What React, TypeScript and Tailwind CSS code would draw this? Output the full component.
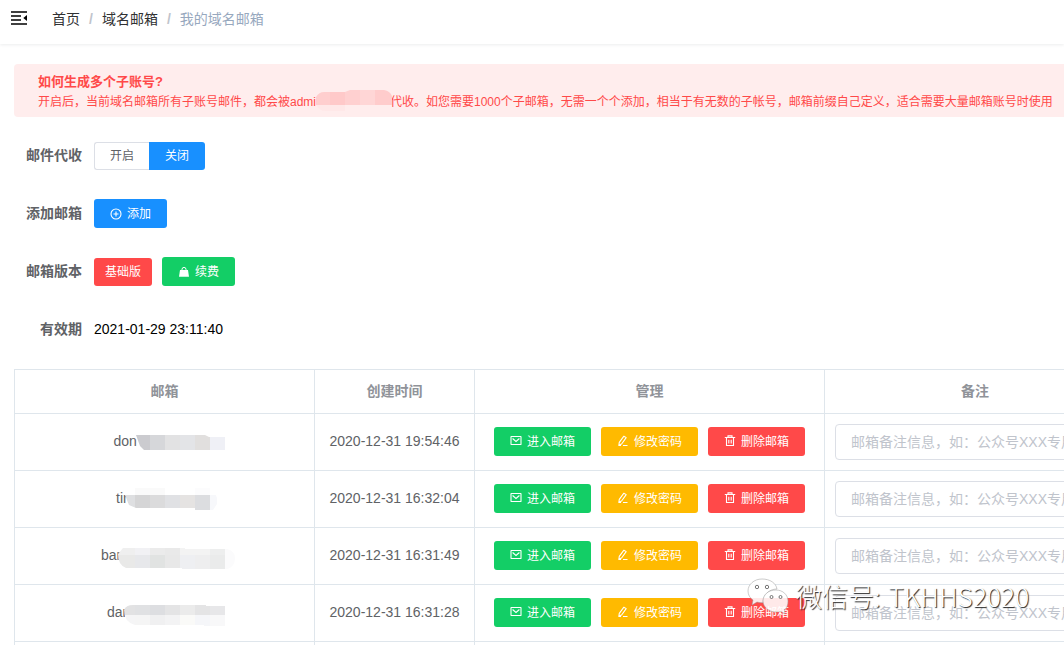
import clsx from "clsx";
import React from "react";

type IconProps = { className?: string };

const strokeProps = {
  viewBox: "0 0 12 12",
  width: 12,
  height: 12,
  fill: "none",
  stroke: "currentColor",
  strokeWidth: 1.1,
};

const MessageIcon = ({ className }: IconProps) => (
  <svg {...strokeProps} className={className}>
    <rect x="1" y="1.5" width="10" height="8" rx="0.3" />
    <path d="M2.6 3.5 L6 6.5 L9.4 3.5" />
  </svg>
);

const EditIcon = ({ className }: IconProps) => (
  <svg {...strokeProps} className={className}>
    <path d="M6.9 1.2 L9.2 2.6 L4.6 9 L1.9 10 L2.3 7.4 Z" strokeLinejoin="round" />
    <path d="M1.5 10.5 H4 M6 10.5 H10.5" />
  </svg>
);

const DeleteIcon = ({ className }: IconProps) => (
  <svg {...strokeProps} className={className}>
    <path d="M0.8 2.5 H11.2 M4 2.5 V0.9 H8 V2.5 M2.5 3 V10.5 H9.5 V3 M4.8 4.8 V8.5 M7.2 4.8 V8.5" />
  </svg>
);

const PlusIcon = ({ className }: IconProps) => (
  <svg {...strokeProps} className={className}>
    <circle cx="6" cy="6" r="5" />
    <path d="M6 3.5 V8.5 M3.5 6 H8.5" />
  </svg>
);

const GoodsIcon = ({ className }: IconProps) => (
  <svg viewBox="0 0 12 12" width="12" height="12" className={className}>
    <path d="M4 4.5 V3.4 a2 2 0 0 1 4 0 V4.5" fill="none" stroke="currentColor" />
    <path d="M2 4 H10 L11 10.8 H1 Z" fill="currentColor" />
  </svg>
);

const FoldIcon = () => (
  <svg viewBox="0 0 16 14" width="16" height="14" className="text-black">
    <path
      d="M0 1 H16 M0 5 H10 M0 9 H10 M0 13 H16"
      stroke="currentColor"
      strokeWidth="1.5"
      fill="none"
    />
    <path d="M16 4 V10 L12.3 7 Z" fill="currentColor" />
  </svg>
);

const colors: Record<string, string> = {
  primary: "bg-[#1890ff]",
  success: "bg-[#13ce66]",
  warning: "bg-[#ffba00]",
  danger: "bg-[#ff4949]",
};

function Button({
  type,
  icon: Icon,
  children,
}: {
  type: string;
  icon: React.FC<IconProps>;
  children: React.ReactNode;
}) {
  return (
    <button
      type="button"
      className={clsx(
        "mb-px flex h-[29px] shrink-0 items-center gap-[5px] rounded-[3px] px-4 text-xs whitespace-nowrap text-white",
        colors[type]
      )}
    >
      <Icon />
      <span className="pt-px">{children}</span>
    </button>
  );
}

function FormItem({ label, children }: { label: string; children: React.ReactNode }) {
  return (
    <div className="flex h-[58px] items-center">
      <div className="w-[68px] pb-0.5 text-right text-sm font-bold text-[#606266]">{label}</div>
      <div className="ml-3 flex items-center gap-2.5">{children}</div>
    </div>
  );
}

// each tile: [x, y, width, height, color]
type Tile = [number, number, number, number, string];

const rows = [
  {
    name: "don",
    width: "w-[102px]",
    time: "2020-12-31 19:54:46",
    shape: "M22 8 H91 L95 10 H112 V23 H30 L26 19 Z",
    tiles: [
      [20, 8, 16, 15, "#cbcbcf"],
      [36, 8, 15, 15, "#d6d7da"],
      [51, 8, 15, 15, "#e2e2e3"],
      [66, 8, 15, 15, "#e3e4e7"],
      [81, 8, 15, 15, "#e1dfde"],
      [96, 8, 15, 15, "#eff0f6"],
    ] as Tile[],
  },
  {
    name: "tin",
    width: "w-[97px]",
    time: "2020-12-31 16:32:04",
    shape: "M9 11 L14 4 H97 L101 14 V20 L97 26 H79 V24 H20 L13 21 Z",
    tiles: [
      [7, 11, 12, 15, "#dedfe1"],
      [19, 4, 30, 7, "#fafafa"],
      [19, 11, 15, 15, "#d5d5d6"],
      [34, 11, 15, 15, "#dbdbdc"],
      [49, 11, 15, 15, "#e0e1e4"],
      [64, 11, 15, 15, "#e5e3e2"],
      [79, 4, 15, 7, "#fcfcfd"],
      [79, 11, 15, 15, "#dcdde0"],
      [94, 11, 7, 15, "#f7f8fb"],
    ] as Tile[],
  },
  {
    name: "bar",
    width: "w-[127px]",
    time: "2020-12-31 16:31:49",
    shape: "M17 13 L22 7 H84 V8 H126 Q134 10 134 17 Q134 26 126 28 H81 V27 H25 Q17 24 17 13 Z",
    tiles: [
      [17, 7, 17, 7, "#efefef"],
      [34, 7, 15, 7, "#f1f1f4"],
      [49, 7, 15, 7, "#ebebeb"],
      [64, 7, 15, 7, "#e9e9e9"],
      [79, 7, 15, 7, "#f3f3f3"],
      [94, 7, 15, 7, "#f3f3f3"],
      [109, 7, 15, 7, "#edeeee"],
      [124, 7, 10, 21, "#fbfbfc"],
      [17, 14, 17, 14, "#e9e9e8"],
      [34, 14, 15, 14, "#e7e8eb"],
      [49, 14, 15, 14, "#e1e3e2"],
      [64, 14, 15, 14, "#e8e8e8"],
      [79, 14, 15, 14, "#eeeff2"],
      [94, 14, 15, 14, "#eeeeef"],
      [109, 14, 15, 14, "#eaebeb"],
    ] as Tile[],
  },
  {
    name: "dar",
    width: "w-[115px]",
    time: "2020-12-31 16:31:28",
    shape: "M17 12 Q19 7 26 7 H99 V8 H118 V28 H97 V27 H28 Q17 24 17 12 Z",
    tiles: [
      [16, 7, 12, 10, "#e2e2e3"],
      [28, 7, 15, 10, "#e0e1e3"],
      [43, 7, 15, 10, "#dddee1"],
      [58, 7, 15, 10, "#e4e4e5"],
      [73, 7, 15, 10, "#ebebeb"],
      [88, 7, 15, 10, "#e4e4e5"],
      [103, 7, 15, 10, "#e7e7e9"],
      [16, 17, 12, 11, "#f5f5f6"],
      [28, 17, 15, 11, "#f5f5f5"],
      [43, 17, 15, 11, "#f0f0f1"],
      [58, 17, 15, 11, "#f3f3f4"],
      [73, 17, 15, 11, "#fafaf8"],
      [88, 17, 15, 11, "#f5f6f9"],
      [103, 17, 15, 11, "#f8f8f9"],
    ] as Tile[],
  },
];

function Mosaic({ id, shape, tiles }: { id: string; shape: string; tiles: Tile[] }) {
  return (
    <svg className="absolute top-0 left-0" width="140" height="30">
      <clipPath id={id}>
        <path d={shape} />
      </clipPath>
      <g clipPath={`url(#${id})`} shapeRendering="crispEdges">
        {tiles.map(([x, y, w, h, fill], key) => (
          <rect key={key} x={x} y={y} width={w} height={h} fill={fill} />
        ))}
      </g>
    </svg>
  );
}

function Alert() {
  return (
    <div className="h-[53px] rounded bg-[#ffeded] px-6 pt-[9px] text-[#ff4949]">
      <div className="text-[13px] leading-[18px] font-bold">如何生成多个子账号?</div>
      <div className="mt-px flex text-xs leading-5 whitespace-nowrap">
        <span>开启后，当前域名邮箱所有子账号邮件，都会被admi</span>
        <svg
          className="relative -mt-[5px] shrink-0 overflow-visible"
          width="74"
          height="24"
          shapeRendering="crispEdges"
        >
          <clipPath id="alert-mask">
            <path d="M0 10 Q3 5 8 5 H29 L34 3 H68 Q74 4 76 9 V18 H29 V24 H9 Q4 24 0 18 Z" />
          </clipPath>
          <g clipPath="url(#alert-mask)">
            <rect x="0" y="3" width="14" height="15" fill="#ffcece" />
            <rect x="14" y="3" width="15" height="15" fill="#ffc9c9" />
            <rect x="29" y="3" width="15" height="15" fill="#ffd0d0" />
            <rect x="44" y="3" width="15" height="15" fill="#ffd6d6" />
            <rect x="59" y="3" width="17" height="15" fill="#ffcccc" />
            <rect x="0" y="18" width="29" height="6" fill="#ffe8e8" />
          </g>
        </svg>
        <span>
          代收。如您需要1000个子邮箱，无需一个个添加，相当于有无数的子帐号，邮箱前缀自己定义，适合需要大量邮箱账号时使用
        </span>
      </div>
    </div>
  );
}

function Watermark() {
  return (
    <div className="pointer-events-none absolute top-[577px] left-[747px] flex items-center gap-[7px]">
      <svg width="42" height="37" viewBox="0 0 42 37">
        <g fill="#fff" fillOpacity="0.88" stroke="#999" strokeWidth="0.5">
          <path d="M15 1 C7 1 1 6.5 1 13 c0 4 2 7 5 9 l-1 5 5-3 c2 .7 4 .8 6 .7 C16 17 22 11 30 11 C29 5 23 1 15 1 Z" />
          <path d="M29 12 C21 12 16 17 16 23 s6 11 13 11 c2 0 3 0 5-.7 l4 2.5 -.8-4 C40 30 41 27 41 23 C41 17 36 12 29 12 Z" />
        </g>
        <g fill="#fff" stroke="#555" strokeWidth="0.8">
          <circle cx="10" cy="9" r="1.7" />
          <circle cx="20" cy="9" r="1.7" />
          <circle cx="24.5" cy="19" r="1.5" />
          <circle cx="33.5" cy="19" r="1.5" />
        </g>
      </svg>
      <div className="flex text-[26px] leading-[38px] font-light whitespace-nowrap text-white [font-family:'Noto_Sans_CJK_SC',sans-serif] [text-shadow:1px_1px_1px_#222]">
        <span>微信号:</span>
        <span className="ml-2 tracking-[0.2px]">TKHHS2020</span>
      </div>
    </div>
  );
}

export default function App() {
  return (
    <div className="relative h-[645px] w-full overflow-hidden bg-white [font-family:'Liberation_Sans','Noto_Sans_CJK_SC',sans-serif]">
      <div className="flex h-11 items-start pt-[9px] pl-[11px] shadow-[0_1px_3px_rgba(0,21,41,0.08)]">
        <div className="pt-[2px]">
          <FoldIcon />
        </div>
        <div className="ml-[25px] flex text-sm leading-5 text-[#303133]">
          <span>首页</span>
          <span className="mx-[9px] font-bold text-[#c0c4cc]">/</span>
          <span>域名邮箱</span>
          <span className="mx-[9px] font-bold text-[#c0c4cc]">/</span>
          <span className="text-[#97a8be]">我的域名邮箱</span>
        </div>
      </div>

      <div className="ml-[14px] w-[1111px] pt-5">
        <Alert />

        <div className="pt-[10px]">
          <FormItem label="邮件代收">
            <div className="flex h-7 text-xs">
              <div className="flex w-[55px] items-center justify-center rounded-l-[3px] border border-r-0 border-[#dcdfe6] text-[#606266]">
                开启
              </div>
              <div className="flex w-14 items-center justify-center rounded-r-[3px] bg-[#1890ff] text-white">
                关闭
              </div>
            </div>
          </FormItem>
          <FormItem label="添加邮箱">
            <Button type="primary" icon={PlusIcon}>
              添加
            </Button>
          </FormItem>
          <FormItem label="邮箱版本">
            <div className="flex h-7 w-[58px] items-center justify-center rounded-[3px] bg-[#ff4949] text-xs text-white">
              基础版
            </div>
            <Button type="success" icon={GoodsIcon}>
              续费
            </Button>
          </FormItem>
          <FormItem label="有效期">
            <span className="pb-0.5 text-sm text-black">2021-01-29 23:11:40</span>
          </FormItem>
        </div>

        <div className="mt-[10px] border-t border-l border-[#dfe6ec] text-sm text-[#606266]">
          <div className="flex h-11 border-b border-[#dfe6ec] font-bold text-[#909399]">
            <div className="flex w-[300px] items-center justify-center border-r border-[#dfe6ec] pb-0.5">邮箱</div>
            <div className="flex w-[160px] items-center justify-center border-r border-[#dfe6ec] pb-0.5">创建时间</div>
            <div className="flex w-[350px] items-center justify-center border-r border-[#dfe6ec] pb-0.5">管理</div>
            <div className="flex w-[300px] items-center justify-center pb-0.5">备注</div>
          </div>
          {rows.map((row, key) => (
            <div key={key} className="flex h-[57px] border-b border-[#dfe6ec]">
              <div className="flex w-[300px] items-center justify-center border-r border-[#dfe6ec]">
                <div className={clsx("relative h-[30px] leading-[28px]", row.width)}>
                  {row.name}
                  <Mosaic id={`mask-${key}`} shape={row.shape} tiles={row.tiles} />
                </div>
              </div>
              <div className="flex w-[160px] items-center justify-center border-r border-[#dfe6ec] pb-[3px]">
                {row.time}
              </div>
              <div className="flex w-[350px] items-center justify-center gap-2.5 border-r border-[#dfe6ec] pb-px">
                <Button type="success" icon={MessageIcon}>
                  进入邮箱
                </Button>
                <Button type="warning" icon={EditIcon}>
                  修改密码
                </Button>
                <Button type="danger" icon={DeleteIcon}>
                  删除邮箱
                </Button>
              </div>
              <div className="flex w-[300px] items-center px-2.5">
                <input
                  type="text"
                  className="h-9 w-full rounded border border-[#dcdfe6] px-[15px] text-sm placeholder:text-[#c0c4cc]"
                  placeholder="邮箱备注信息，如：公众号XXX专用"
                />
              </div>
            </div>
          ))}
          <div className="flex h-[57px]">
            <div className="w-[300px] border-r border-[#dfe6ec]" />
            <div className="w-[160px] border-r border-[#dfe6ec]" />
            <div className="w-[350px] border-r border-[#dfe6ec]" />
          </div>
        </div>
      </div>

      <Watermark />
    </div>
  );
}
